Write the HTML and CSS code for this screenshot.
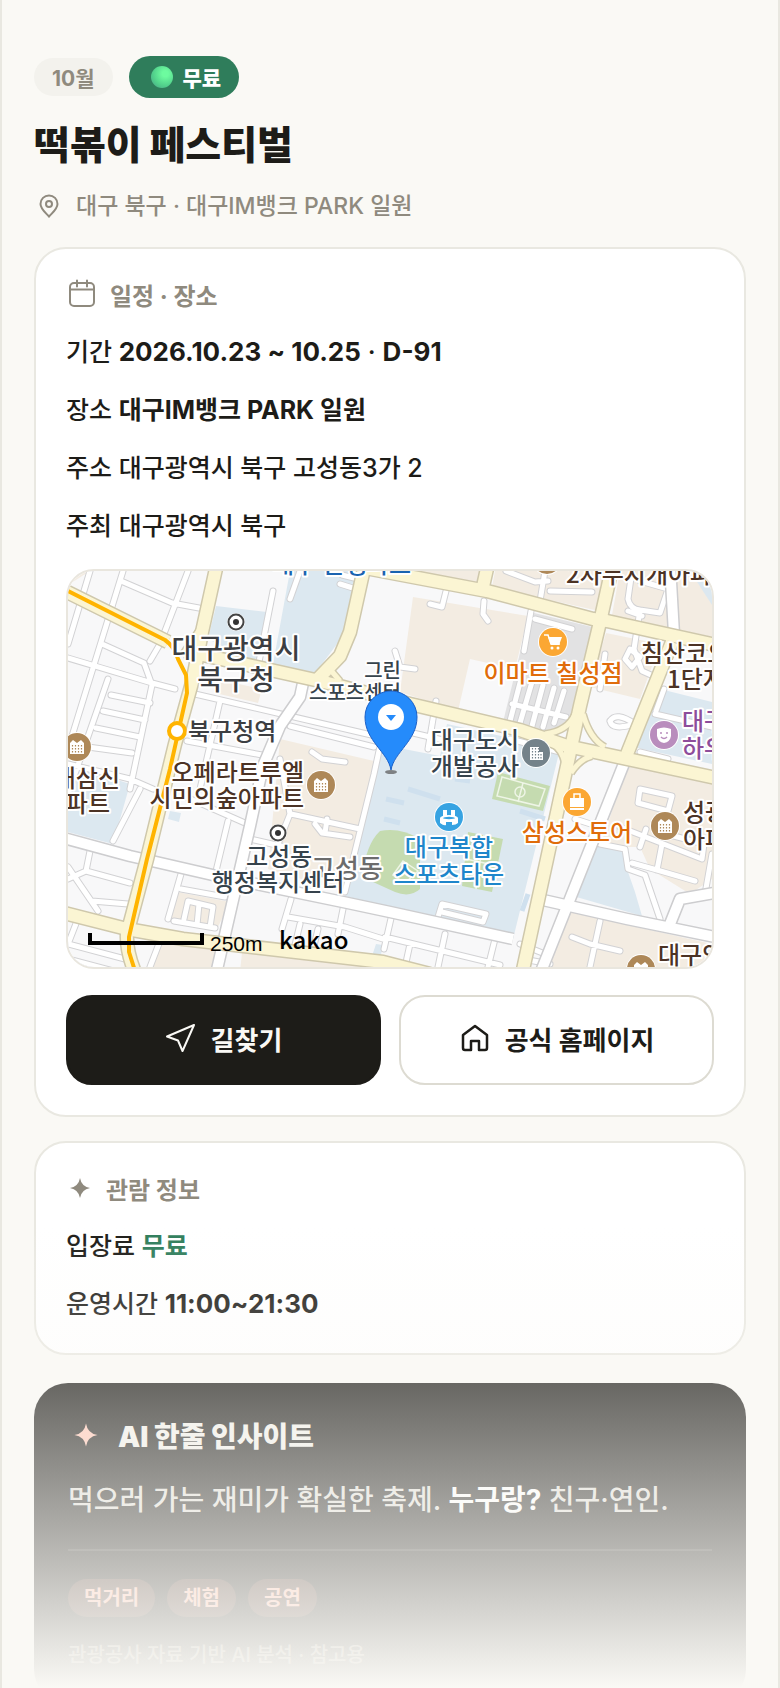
FILE: index.html
```html
<!DOCTYPE html>
<html lang="ko">
<head>
<meta charset="utf-8">
<meta name="viewport" content="width=device-width, initial-scale=1">
<title>떡볶이 페스티벌</title>
<link rel="stylesheet" href="styles.css">
</head>
<body>
<main class="page">
  <div class="badges">
    <span class="badge badge-month">10월</span>
    <span class="badge badge-free"><span class="dot"></span>무료</span>
  </div>
  <h1 class="title">떡볶이 페스티벌</h1>
  <p class="place">
    <svg class="place-icon" viewBox="0 0 24 24" fill="none" stroke="currentColor" stroke-width="2"><path d="M12 22.500C8.500 18.500 3.500 14.800 3.500 9.900a8.500 8.500 0 0 1 17 0c0 4.900-5 8.600-8.500 12.600z"/><circle cx="12" cy="10" r="3"/></svg>
    대구 북구 · 대구IM뱅크 PARK 일원
  </p>

  <section class="card">
    <h2 class="card-head">
      <svg class="card-icon" viewBox="0 0 32 32" fill="none" stroke="currentColor" stroke-width="2" stroke-linecap="round"><rect x="4" y="5" width="24" height="23" rx="4"/><path d="M4 11.500h24M11 2.500v6M21 2.500v6"/></svg>
      일정 · 장소
    </h2>
    <p class="row">기간 <span class="num"><b>2026.10.23 ~ 10.25</b> · <b>D-91</b></span></p>
    <p class="row">장소 <b>대구IM뱅크 PARK 일원</b></p>
    <p class="row">주소 대구광역시 북구 고성동3가 2</p>
    <p class="row">주최 대구광역시 북구</p>

    <div class="map">
      <svg class="map-svg" viewBox="68 572 644 396" preserveAspectRatio="xMidYMid slice" role="img" aria-label="지도">
        <defs>
          <g id="apt"><circle r="15" fill="#fff"/><circle r="14" fill="#ae8858"/><path d="M-7 7V-4l3-3 4 3 4-3 3 3V7z" fill="#fff"/><path d="M-4.500-2v8M-1.500-2v8M1.500-2v8M4.500-2v8" stroke="#ae8858" stroke-width="1.200" stroke-dasharray="1.500 1.500"/></g>
          <g id="office"><circle r="9" fill="#fff"/><circle r="7.500" fill="#fff" stroke="#444" stroke-width="2"/><circle r="3" fill="#333"/></g>
          <g id="lanes">
            <path d="M90 572 68 645M123 572 68 750M121 582 172 604 199 609M188 572 160 645 150 662M102 645 144 664 152 686 130 790M68 659 152 684 175 690M108 680 68 795M111 696 150 704M103 712 145 721M96 729 140 738M88 748 132 754M68 765 130 780 153 790"/>
            <path d="M273 592 258 668M195 695 380 738M220 702 200 790M187 742 262 756M186 798 245 824M228 822 216 872M290 727 374 748M312 753 322 760 345 763M68 945 125 960M140 790 113 842M90 852 86 872 68 880M86 872 130 884M68 868 98 912M128 905 92 902M77 922 68 945"/>
            <path d="M181 875 168 920M181 890 225 898M174 922 215 929M184 920 188 902 213 908 210 928M199 905 197 926M291 900 282 930M288 918 345 928 383 940M300 925 294 950M318 930 312 955M343 910 338 935M68 960 125 975M160 942 150 968"/>
            <path d="M250 840 285 848M291 815 360 830M315 825 322 834 350 838M327 820 325 834M382 738 374 775 345 893M280 760 290 815 278 845"/>
            <path d="M531 612 524 652M535 620 572 630M430 605 442 608 446 592M484 602 483 615 488 622M545 572 540 602M506 572 535 583 548 582M550 592 592 593M395 652 400 668 415 670M436 702 428 750M396 730 447 742M510 740 560 753"/>
            <path d="M632 572 628 600Q630 610 640 611L660 614 668 590 640 582M640 611 634 650 642 672 660 680M628 612 642 617M630 650 640 658 632 668 625 660zM605 655 600 690"/>
            <path d="M610 722Q616 712 635 725Q612 732 610 722M664 690 656 712M655 715 712 728M640 753 668 760"/>
            <path d="M640 790 672 797 668 812 638 804zM575 820 600 828M600 845 625 850 628 870 645 876 660 920M620 828 702 860 704 845 655 832M646 830 640 848M632 864 657 871 695 882M657 871 662 845M712 855 705 895"/>
            <path d="M438 918 442 905 486 915 483 923 442 913M392 915 384 950M385 938 500 966M445 935 438 968M495 940 488 968M410 945 405 968M520 945 545 955M600 922 590 968M572 938 590 945 620 952M523 960 550 965"/>
            <path d="M521 680 510 722M532 683 520 724M543 686 532 727M554 689 543 728M564 692 554 724M512 705 566 718M300 572 290 600M340 585 356 590M342 576 358 580"/>
          </g>
          <g id="whites">
            <path d="M60 838 130 857 217 877 343 903 390 913 513 940M543 901 627 920 720 939M303 684 300 698 280 727 263 767 250 827 216 975"/>
            <path d="M670 565 674 635M625 762 540 975M720 893 680 900 668 930"/>
          </g>
          <g id="ramps">
            <path d="M575 715Q568 732 545 735M583 715Q590 740 605 748M566 770Q563 750 552 745M571 774Q580 760 592 757M183 655 200 630M328 668 340 682"/>
          </g>
          <g id="roads">
            <path d="M55 587 168 643M365 565 350 633 340 657 315 683M60 913 127 930 183 940 383 963 430 975M488 565 482 592M672 643 627 755"/>
            <path d="M360 568 487 592 593 620 607 622 720 647"/>
            <path d="M185 652 320 682 410 705 520 731 567 747 725 781"/>
            <path d="M614 560 600 623 580 707 567 767 547 860 521 980"/>
            <path d="M217 565 202 633 193 680 175 745 147 860 127 935Q126 955 138 980"/>
          </g>
        </defs>
        <rect x="60" y="560" width="670" height="420" fill="#f8f8f9"/>
        <g fill="#f3ece2">
          <path d="M68 572h22l-22 14z"/>
          <path d="M413 598 528 617 515 670 470 660 458 712 400 693z"/>
          <path d="M380 572h105l-4 18-85-18zM495 572h112l-8 40-107-24zM620 572h92v66l-100-22z"/>
          <path d="M606 634 660 645 640 700 590 688z"/>
          <path d="M280 740 374 762 345 893 268 870z"/>
          <path d="M215 680 262 690 258 704 215 694z"/>
          <path d="M177 893 230 903 217 930 170 923z"/>
          <path d="M160 937 217 947 213 968H150zM242 953 380 965v8H240z"/>
          <path d="M627 767 712 785V880L690 895 650 870 640 848H600z"/>
          <path d="M570 913 712 945v25H548z"/>
        </g>
        <g fill="#dce8f0">
          <path d="M290 572h70l-17 65-30 40-40-12z"/>
          <path d="M216 607 267 613 262 667 208 640z"/>
          <path d="M378 745 440 757 447 725 560 750 513 940 345 897z"/>
          <path d="M68 765 130 785 113 845 68 833z"/>
          <path d="M593 848h32l3 25 7 20 7 24-69-20z"/>
          <path d="M660 690 712 703v62l-79-17z"/>
          <path d="M690 572h22v34z"/>
          <path d="M170 812 181 814 179 823 168 820zM376 945 383 946 379 965 370 963z"/>
        </g>
        <path d="M386 800 404 804M384 820 400 824M408 790 440 800M455 780 470 782M520 812 545 820M522 912 528 895" stroke="#cfe0ee" stroke-width="5" fill="none"/>
        <path d="M530 613 592 628 573 713Q562 732 540 733L503 723z" fill="#e2e2e3"/>
        <g fill="#c5dbb0">
          <path d="M498 773 550 787 543 812 492 800z"/>
          <path d="M380 832Q400 828 420 840L420 890Q410 899 395 893L362 878Q366 845 380 832z"/>
          <path d="M468 833 503 840 492 893 462 887z"/>
        </g>
        <g fill="none" stroke="#eef5e6" stroke-width="1.500">
          <path d="M502 778 545 790 539 807 497 797zM523 784 518 803"/><circle cx="520" cy="793" r="5"/>
          <path d="M393 876 403 862 418 872 405 884zM484 836 476 890M466 860 498 867"/>
        </g>

        <g fill="none" stroke-linejoin="round">
          <use href="#lanes" class="lane-edge"/>
          <use href="#lanes" class="lane-fill"/>
          <use href="#whites" class="street-edge"/>
          <use href="#whites" class="street-fill"/>
          <use href="#ramps" class="ramp-edge"/>
          <use href="#roads" class="road-edge"/>
          <use href="#ramps" class="ramp-fill"/>
          <use href="#roads" class="road-fill"/>
          <path d="M60 588 165 641Q175 648 178 660L186 676 187 694 170 770 147 860 129 938 129 953 136 975" stroke="#ffb400" stroke-width="4"/>
        </g>
        <circle cx="177" cy="732" r="8" fill="#fff" stroke="#ffb400" stroke-width="4"/>

        <use href="#apt" x="77" y="748"/><use href="#apt" x="321" y="786"/><use href="#apt" x="665" y="827"/><use href="#apt" x="641" y="970"/><use href="#apt" x="547" y="561"/>
        <use href="#office" x="236" y="623"/><use href="#office" x="278" y="834"/>
        <g transform="translate(553 643)"><circle r="15" fill="#fff"/><circle r="14" fill="#fba733"/><path d="M-9-7h4l3 9h9" fill="none" stroke="#fff" stroke-width="1.500"/><path d="M-5-5H9L6 3H-2z" fill="#fff"/><circle cx="-1" cy="6" r="1.500" fill="#fff"/><circle cx="5" cy="6" r="1.500" fill="#fff"/></g>
        <g transform="translate(577 803)"><circle r="15" fill="#fff"/><circle r="14" fill="#fba733"/><path d="M-7-4H7V5H-7z M-7 6H7V8H-7z" fill="#fff"/><path d="M-3-4v-4h6v4" fill="none" stroke="#fff" stroke-width="1.500"/></g>
        <g transform="translate(449 818)"><circle r="15" fill="#fff"/><circle r="14" fill="#37a3e2"/><path d="M-6-7h4v6h-4zM2-7h4v6H2z" fill="#fff"/><ellipse cy="1" rx="9" ry="3" fill="#fff"/><path d="M-9 1v5q4 3 6 2V5h6v3q4 0 6-2V1z" fill="#fff"/><ellipse cy="1" rx="6" ry="1.200" fill="#37a3e2"/></g>
        <g transform="translate(536 754)"><circle r="15" fill="#fff"/><circle r="14" fill="#74828a"/><path d="M-6-6H3V-1H7V7H-6z" fill="#fff"/><path d="M-3.500-5V6M-.5-5V6M2.500-5V6M5 1V6" stroke="#74828a" stroke-width="1.200" stroke-dasharray="1.500 1.500"/></g>
        <g transform="translate(664 736)"><circle r="15" fill="#fff"/><circle r="14" fill="#b98dbd"/><path d="M-7-6Q0-9 7-6V1Q6 7 0 8Q-6 7-7 1z" fill="#fff"/><path d="M-3-3v2M3-3v2M-3 2q3 3 6 0" fill="none" stroke="#b98dbd" stroke-width="1.500"/></g>

        <g class="label">
          <text class="t26 grey" x="311" y="879">고성동</text>
          <g class="t28 ink" text-anchor="middle"><text x="236" y="660">대구광역시</text><text x="236" y="691">북구청</text></g>
          <text class="t24 ink" x="188" y="741">북구청역</text>
          <g class="t20 slate" text-anchor="end"><text x="401" y="679">그린</text><text x="401" y="701">스포츠센터</text></g>
          <g class="t24 brown" text-anchor="end"><text x="304" y="782">오페라트루엘</text><text x="304" y="808">시민의숲아파트</text><text x="120" y="788">대삼신</text><text x="110" y="813">파트</text></g>
          <g class="t24 slate" text-anchor="middle"><text x="279" y="866">고성동</text><text x="278" y="892">행정복지센터</text><text x="475" y="750">대구도시</text><text x="475" y="776">개발공사</text></g>
          <g class="t24 orange" text-anchor="middle"><text x="553" y="683">이마트 칠성점</text><text x="577" y="842">삼성스토어</text></g>
          <g class="t24 sky" text-anchor="middle"><text x="449" y="857">대구복합</text><text x="449" y="884">스포츠타운</text></g>
          <text class="t24 navy" x="272" y="574">대구 은행파크</text>
          <g class="t24 brown"><text x="566" y="584">2차무지개아파트</text><text x="641" y="663">침산코오롱</text><text x="667" y="689">1단지</text><text x="683" y="822">성광</text><text x="683" y="849">아파트</text><text x="658" y="965">대구역</text></g>
          <g class="t24 purple"><text x="682" y="731">대구</text><text x="682" y="758">하우스</text></g>
        </g>

        <ellipse cx="391" cy="773" rx="6" ry="2" fill="#555" opacity=".7"/>
        <path d="M391 771C388 753 365 742 365 718a26 26 0 0 1 52 0C417 742 394 753 391 771z" fill="#258bfb" stroke="#1a60c8"/>
        <circle cx="391" cy="718" r="13" fill="#fff"/>
        <path d="M386 716h10l-5 6z" fill="#258bfb"/>

        <path d="M90 934v10h112v-10" fill="none" stroke="#000" stroke-width="4"/>
        <text class="scale" x="210" y="952">250m</text>
        <text class="brand" x="279" y="950">kakao</text>
      </svg>
    </div>

    <div class="actions">
      <button class="btn btn-dark" type="button">
        <svg class="btn-icon" viewBox="0 0 32 32" fill="none" stroke="currentColor" stroke-width="2" stroke-linejoin="round"><path d="M29 3 2 14.500l11 4L17.500 29z"/></svg>
        길찾기
      </button>
      <a class="btn btn-light" href="#home">
        <svg class="btn-icon" viewBox="0 0 32 32" fill="none" stroke="currentColor" stroke-width="2.500" stroke-linejoin="round"><path d="M16 4 28 13V26q0 2-2 2H20V19H12v9H6q-2 0-2-2V13z"/></svg>
        공식 홈페이지
      </a>
    </div>
  </section>

  <section class="card card-info">
    <h2 class="card-head">
      <svg class="spark" viewBox="0 0 28 28" fill="currentColor"><path d="M14 4Q15.500 12.500 24 14Q15.500 15.500 14 24Q12.500 15.500 4 14Q12.500 12.500 14 4z"/></svg>
      관람 정보
    </h2>
    <p class="row">입장료 <b class="free">무료</b></p>
    <p class="row">운영시간 <b class="num">11:00~21:30</b></p>
  </section>

  <section class="insight">
    <h2 class="insight-head">
      <svg class="spark-lg" viewBox="0 0 28 28" fill="#ffc4b2"><path d="M14 5Q15.200 12.800 23 14Q15.200 15.200 14 23Q12.800 15.200 5 14Q12.800 12.800 14 5z"/></svg>
      AI 한줄 인사이트
    </h2>
    <p class="insight-text">먹으러 가는 재미가 확실한 축제. <b>누구랑?</b> 친구·연인.</p>
    <div class="tags"><span class="tag">먹거리</span><span class="tag">체험</span><span class="tag">공연</span></div>
    <p class="note">관광공사 자료 기반 AI 분석 · 참고용</p>
  </section>
  <div class="fade"></div>
</main>
</body>
</html>
```
FILE: styles.css
```css
* { box-sizing: border-box; }

body {
  margin: 0;
  background: #faf9f5;
  color: #1d1c18;
  font-family: Inter, "Noto Sans CJK KR", sans-serif;
  font-weight: 500;
}

h1, h2, p { margin: 0; }
b { font-weight: 700; }

.page {
  position: relative;
  height: 100vh;
  overflow: hidden;
  padding: 56px 32px 0;
  border: 0 solid #e9e8e1;
  border-width: 0 2px;
}

.badges { display: flex; align-items: center; gap: 16px; }
.badge { display: flex; align-items: center; border-radius: 24px; font-size: 21px; font-weight: 700; }
.badge-month { height: 38px; padding: 0 18px; background: #f3f2ed; color: #8f8a7e; }
.badge-free { height: 42px; padding: 0 18px 0 22px; gap: 10px; background: #2f7d5b; color: #fff; font-weight: 900; }
.dot {
  width: 22px;
  height: 22px;
  border-radius: 50%;
  background: radial-gradient(circle at 65% 35%, #6dfb9f 15%, #51d08b 60%, #4a9a88 100%);
}

.title { margin-top: 21px; font-size: 39px; line-height: 52px; font-weight: 900; }
.place {
  display: flex;
  align-items: center;
  gap: 15px;
  margin-top: 18px;
  padding-left: 3px;
  color: #8f8a7e;
  font-size: 23px;
  line-height: 34px;
}
.place-icon { width: 24px; height: 24px; }

.card {
  margin-top: 24px;
  padding: 28px 30px 30px;
  border: 2px solid #e9e8e1;
  border-radius: 32px;
  background: #fff;
}
.card-info { padding-bottom: 28px; }
.card-head {
  display: flex;
  align-items: center;
  gap: 12px;
  height: 34px;
  margin-bottom: 20px;
  color: #8f8a7e;
  font-size: 24px;
  font-weight: 700;
}
.card-icon { width: 32px; height: 32px; }
.spark { width: 28px; height: 28px; }
.row { font-size: 25px; line-height: 42px; }
.row + .row { margin-top: 16px; }
.num { font-size: 26px; }
.free { color: #2f7d5b; }

.map {
  margin-top: 22px;
  border: 2px solid #e9e6de;
  border-radius: 28px;
  overflow: hidden;
}
.map-svg { display: block; width: 100%; font-family: "Noto Sans CJK KR", sans-serif; }
.lane-edge { stroke: #d2d2d4; stroke-width: 7px; stroke-linecap: round; }
.lane-fill { stroke: #fff; stroke-width: 5px; stroke-linecap: round; }
.street-edge { stroke: #cdcdcf; stroke-width: 13px; }
.street-fill { stroke: #fff; stroke-width: 10px; }
.ramp-edge { stroke: #cfc8ac; stroke-width: 8px; }
.ramp-fill { stroke: #fbf5d3; stroke-width: 5px; }
.road-edge { stroke: #cfc8ac; stroke-width: 15px; }
.road-fill { stroke: #fbf5d3; stroke-width: 12px; }
.label { font-weight: 500; paint-order: stroke; stroke: #fff; stroke-width: 4px; stroke-linejoin: round; }
.t28 { font-size: 28px; }
.t26 { font-size: 26px; }
.t24 { font-size: 24px; }
.t20 { font-size: 20px; }
.grey { fill: #6c6c6c; }
.ink { fill: #3c3e42; }
.slate { fill: #36434c; }
.brown { fill: #4c3325; }
.orange { fill: #e06c0a; }
.sky { fill: #1e86cb; }
.navy { fill: #1a63b0; }
.purple { fill: #8d4d9b; }
.scale { font: 21px "Liberation Sans", sans-serif; }
.brand { font: 500 24px "Noto Sans CJK KR", sans-serif; }

.actions { display: grid; grid-template-columns: 1fr 1fr; gap: 18px; margin-top: 26px; }
.btn {
  display: flex;
  align-items: center;
  justify-content: center;
  gap: 14px;
  height: 90px;
  padding: 0 0 4px;
  border: 2px solid #1d1c18;
  border-radius: 26px;
  font: inherit;
  font-size: 26px;
  font-weight: 700;
  text-decoration: none;
}
.btn-dark { background: #1d1c18; color: #faf9f5; }
.btn-light { border-color: #dddbd2; background: #fff; color: #1d1c18; }
.btn-icon { width: 32px; height: 32px; }

.insight {
  margin-top: 28px;
  padding: 34px;
  border-radius: 34px;
  background: #1d1c18;
  color: #dedcd5;
}
.insight-head { display: flex; align-items: center; gap: 14px; height: 36px; color: #f1efe9; font-size: 28px; font-weight: 900; }
.spark-lg { width: 36px; height: 36px; }
.insight-text { margin-top: 24px; padding-bottom: 26px; border-bottom: 2px solid #393834; font-size: 28px; line-height: 46px; }
.insight-text b { color: #fff; }
.tags { display: flex; gap: 12px; margin-top: 28px; }
.tag { height: 38px; padding: 0 16px; border-radius: 20px; background: #4a332b; color: #ffb8a4; font-size: 20px; font-weight: 700; line-height: 38px; }
.note { margin-top: 24px; color: #8f8a7e; font-size: 20px; line-height: 28px; }

/* The preview fades out towards the bottom edge */
.fade {
  position: absolute;
  right: 0;
  bottom: 0;
  left: 0;
  height: 462px;
  background: linear-gradient(rgba(250, 249, 245, 0), #faf9f5);
  pointer-events: none;
}
```
